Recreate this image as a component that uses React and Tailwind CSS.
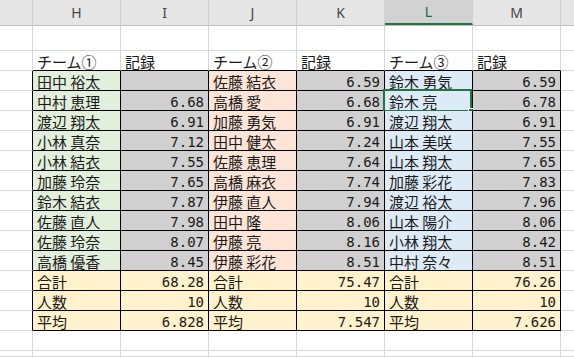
import React from "react";

const WIDTHS = ["w-[33px]", "w-[88px]", "w-[88px]", "w-[88px]", "w-[88px]", "w-[88px]", "w-[88px]", "w-[13px]"];
const LETTERS = ["", "H", "I", "J", "K", "L", "M", ""];

const teams = [
  {
    fill: "bg-[#e2efda]",
    rows: [
      ["田中 裕太", ""],
      ["中村 恵理", "6.68"],
      ["渡辺 翔太", "6.91"],
      ["小林 真奈", "7.12"],
      ["小林 結衣", "7.55"],
      ["加藤 玲奈", "7.65"],
      ["鈴木 結衣", "7.87"],
      ["佐藤 直人", "7.98"],
      ["佐藤 玲奈", "8.07"],
      ["高橋 優香", "8.45"],
    ],
    sum: ["68.28", "10", "6.828"],
  },
  {
    fill: "bg-[#fce4d6]",
    rows: [
      ["佐藤 結衣", "6.59"],
      ["高橋 愛", "6.68"],
      ["加藤 勇気", "6.91"],
      ["田中 健太", "7.24"],
      ["佐藤 恵理", "7.64"],
      ["高橋 麻衣", "7.74"],
      ["伊藤 直人", "7.94"],
      ["田中 隆", "8.06"],
      ["伊藤 亮", "8.16"],
      ["伊藤 彩花", "8.51"],
    ],
    sum: ["75.47", "10", "7.547"],
  },
  {
    fill: "bg-[#ddebf7]",
    rows: [
      ["鈴木 勇気", "6.59"],
      ["鈴木 亮", "6.78"],
      ["渡辺 翔太", "6.91"],
      ["山本 美咲", "7.55"],
      ["山本 翔太", "7.65"],
      ["加藤 彩花", "7.83"],
      ["渡辺 裕太", "7.96"],
      ["山本 陽介", "8.06"],
      ["小林 翔太", "8.42"],
      ["中村 奈々", "8.51"],
    ],
    sum: ["76.26", "10", "7.626"],
  },
];

const SUM_LABELS = ["合計", "人数", "平均"];

// build sheet rows: each row is 8 cells {text, right, bg}
function buildRows() {
  const empty = () => Array.from({ length: 8 }, () => ({ text: "", right: false, bg: "" }));
  const rows = [];
  rows.push({ h: "h-[25px]", cells: empty() });
  const heads = empty();
  teams.forEach((t, i) => {
    heads[1 + i * 2].text = ["チーム①", "チーム②", "チーム③"][i];
    heads[2 + i * 2].text = "記録";
  });
  rows.push({ h: "h-[20px]", cells: heads });
  for (let r = 0; r < 10; r++) {
    const cells = empty();
    teams.forEach((t, i) => {
      cells[1 + i * 2] = { text: t.rows[r][0], right: false, bg: t.fill };
      cells[2 + i * 2] = { text: t.rows[r][1], right: true, bg: "bg-[#d0d0d0]" };
    });
    rows.push({ h: "h-[20px]", cells });
  }
  for (let s = 0; s < 3; s++) {
    const cells = empty();
    teams.forEach((t, i) => {
      cells[1 + i * 2] = { text: SUM_LABELS[s], right: false, bg: "bg-[#fff2cc]" };
      cells[2 + i * 2] = { text: t.sum[s], right: true, bg: "bg-[#fff2cc]" };
    });
    rows.push({ h: "h-[20px]", cells });
  }
  rows.push({ h: "h-[20px]", cells: empty() });
  rows.push({ h: "h-[6px]", cells: empty() });
  return rows;
}

function Selection() {
  return (
    <div className="absolute -left-[2px] -top-[2px] w-[89px] h-[23px] border-2 border-[#217346] pointer-events-none">
      <div className="absolute -right-[4px] -bottom-[4px] w-[6px] h-[6px] bg-[#217346] border border-white" />
    </div>
  );
}

export default function App() {
  const rows = buildRows();
  // sheet row index r: 0 = blank, 1 = headings, 2..14 = bordered block
  return (
    <div className="w-[574px] h-[357px] overflow-hidden bg-white font-['Noto_Sans_CJK_JP','Noto_Sans',sans-serif] text-[15px] text-[#1a1a1a]">
      <div className="flex h-[26px] bg-[#e6e6e6] border-b border-[#bdbdbd]">
        {LETTERS.map((l, c) => (
          <div
            key={c}
            className={`${WIDTHS[c]} shrink-0 flex items-center justify-center text-[14px] font-['Noto_Sans',sans-serif] ${
              c < 7 ? "border-r border-[#d0d0d0]" : ""
            } ${c === 5 ? "bg-[#d2d2d2] border-b-2 border-b-[#217346] text-[#1e6b41]" : "text-[#444]"}`}
          >
            {l}
          </div>
        ))}
      </div>
      {rows.map((row, r) => (
        <div key={r} className={`flex ${row.h}`}>
          {row.cells.map((cell, c) => {
            const inRows = r >= 2 && r <= 14;
            const rightBlack = inRows && c <= 6;
            const bottomBlack = c >= 1 && c <= 6 && r >= 1 && r <= 14;
            return (
              <div
                key={c}
                className={`${WIDTHS[c]} shrink-0 relative flex items-center leading-none whitespace-nowrap ${
                  cell.right ? "justify-end pr-[4px] font-['DejaVu_Sans_Mono',monospace] text-[14px]" : "pl-[4px]"
                } ${cell.bg} border-b ${bottomBlack ? "border-b-black" : "border-b-[#d6d6d6]"} ${
                  c < 7 ? "border-r" : ""
                } ${rightBlack ? "border-r-black" : "border-r-[#d6d6d6]"}`}
              >
                <span className="pt-[2px]">{cell.text}</span>
                {r === 3 && c === 5 && <Selection />}
              </div>
            );
          })}
        </div>
      ))}
    </div>
  );
}
